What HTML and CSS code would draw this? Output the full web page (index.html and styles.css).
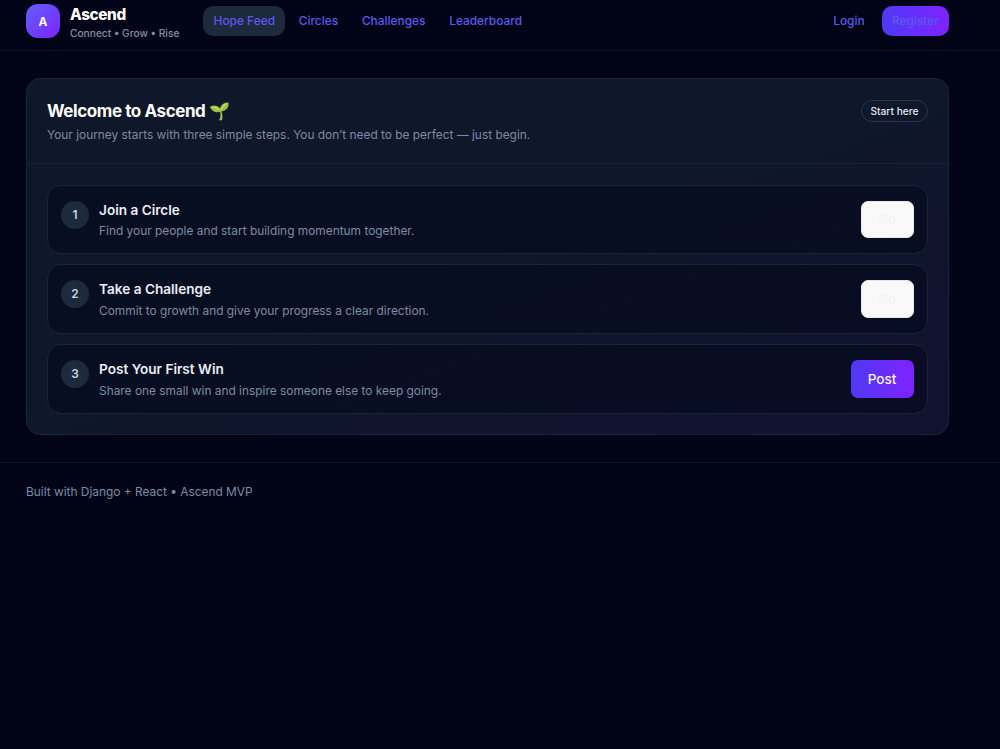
FILE: index.html
```html
<!DOCTYPE html>
<html lang="en">
<head>
  <meta charset="UTF-8">
  <title>Ascend</title>
  <link rel="stylesheet" href="styles.css">
</head>
<body>
  <header class="header">
    <div class="brand">
      <div class="logo">A</div>
      <div class="brand-text">
        <div class="brand-name">Ascend</div>
        <div class="brand-tag">Connect • Grow • Rise</div>
      </div>
    </div>
    <nav class="nav">
      <a class="nav-link active" href="#">Hope Feed</a>
      <a class="nav-link" href="#">Circles</a>
      <a class="nav-link" href="#">Challenges</a>
      <a class="nav-link" href="#">Leaderboard</a>
    </nav>
    <div class="account">
      <a class="nav-link" href="#">Login</a>
      <a class="nav-link register" href="#">Register</a>
    </div>
  </header>

  <main class="main">
    <section class="card">
      <div class="card-header">
        <div>
          <h1 class="card-title">Welcome to Ascend 🌱</h1>
          <p class="card-subtitle">Your journey starts with three simple steps. You don’t need to be perfect — just begin.</p>
        </div>
        <span class="badge">Start here</span>
      </div>
      <div class="steps">
        <div class="step">
          <div class="step-number">1</div>
          <div class="step-text">
            <h2 class="step-title">Join a Circle</h2>
            <p class="step-desc">Find your people and start building momentum together.</p>
          </div>
          <button class="btn">Go</button>
        </div>
        <div class="step">
          <div class="step-number">2</div>
          <div class="step-text">
            <h2 class="step-title">Take a Challenge</h2>
            <p class="step-desc">Commit to growth and give your progress a clear direction.</p>
          </div>
          <button class="btn">Go</button>
        </div>
        <div class="step">
          <div class="step-number">3</div>
          <div class="step-text">
            <h2 class="step-title">Post Your First Win</h2>
            <p class="step-desc">Share one small win and inspire someone else to keep going.</p>
          </div>
          <button class="btn btn-primary">Post</button>
        </div>
      </div>
    </section>
  </main>

  <footer class="footer">Built with Django + React • Ascend MVP</footer>
</body>
</html>
```

FILE: styles.css
```css
* {
  margin: 0;
  padding: 0;
  box-sizing: border-box;
}
body {
  min-height: 100vh;
  background: #010416;
  color: #f1f5f9;
  font-family: Inter, "Noto Color Emoji", sans-serif;
  font-size: 11.9px;
}
.header {
  display: flex;
  align-items: center;
  height: 51px;
  padding: 0 51px 8px 26px;
  border-bottom: 1px solid #0d1528;
}
.brand {
  display: flex;
  align-items: center;
  gap: 10px;
}
.logo {
  display: flex;
  align-items: center;
  justify-content: center;
  width: 34px;
  height: 34px;
  border-radius: 12px;
  background: linear-gradient(135deg, #615fff, #7f22fe);
  color: #fff;
  font-size: 11.9px;
  font-weight: 700;
}
.brand-text {
  padding-top: 4px;
}
.brand-name {
  font-size: 15.3px;
  line-height: 19px;
  font-weight: 800;
  letter-spacing: -0.025em;
  color: #fff;
}
.brand-tag {
  font-size: 10.2px;
  line-height: 18px;
  font-weight: 500;
  color: #8291a8;
}
.nav {
  display: flex;
  gap: 3.4px;
  margin-left: 24px;
}
.nav-link {
  padding: 0 10.2px;
  border-radius: 10px;
  color: #5b59ee;
  font-size: 11.9px;
  font-weight: 500;
  line-height: 30.4px;
  text-decoration: none;
}
.nav-link.active {
  background: #1d293d;
}
.account {
  display: flex;
  gap: 7px;
  margin-left: auto;
}
.nav-link.register {
  background: linear-gradient(90deg, #4f39f6, #7f22fe);
}
.main {
  padding: 27px 51px 27px 26px;
}
.card {
  border: 1px solid #1a2438;
  border-radius: 14px;
  background: linear-gradient(160deg, #0f172b 0%, #0f172b 50%, #111230 100%);
}
.card-header {
  display: flex;
  justify-content: space-between;
  align-items: flex-start;
  height: 85.4px;
  padding: 20px;
  border-bottom: 1px solid #172136;
}
.card-title {
  font-size: 17px;
  line-height: 24px;
  font-weight: 700;
  letter-spacing: -0.025em;
  color: #fff;
}
.card-subtitle {
  line-height: 23px;
  color: #7b8ba3;
}
.badge {
  margin-top: 1px;
  padding: 0 8.5px;
  border: 1px solid #28354a;
  border-radius: 11px;
  font-size: 10.2px;
  font-weight: 500;
  line-height: 20px;
  color: #e2e8f0;
}
.steps {
  display: flex;
  flex-direction: column;
  gap: 10.2px;
  padding: 20.2px 20px 20px;
}
.step {
  display: flex;
  gap: 10px;
  height: 69.6px;
  padding: 15px 13.4px 15px 13px;
  border: 1px solid #1a2438;
  border-radius: 14px;
  background: rgba(2, 6, 24, 0.5);
}
.step-number {
  width: 28px;
  height: 28px;
  border-radius: 50%;
  background: #1d293d;
  color: #cad5e2;
  font-weight: 600;
  line-height: 28px;
  text-align: center;
}
.step-text {
  flex: 1;
}
.step-title {
  font-size: 13.6px;
  line-height: 18.4px;
  font-weight: 600;
  color: #e8edf4;
}
.step-desc {
  line-height: 24.4px;
  color: #7b8ba3;
}
.btn {
  width: 53px;
  height: 37.6px;
  border: 1px solid #e8e8ee;
  border-radius: 7px;
  background: #f9f9f9;
  color: #f1f5f9;
  font-family: inherit;
  font-size: 13.6px;
  font-weight: 500;
}
.btn-primary {
  width: 63px;
  border: 0;
  background: linear-gradient(90deg, #4f39f6, #7f22fe);
}
.footer {
  padding: 20px 26px;
  border-top: 1px solid #0d1528;
  line-height: 18px;
  color: #7b8ba3;
}
```
